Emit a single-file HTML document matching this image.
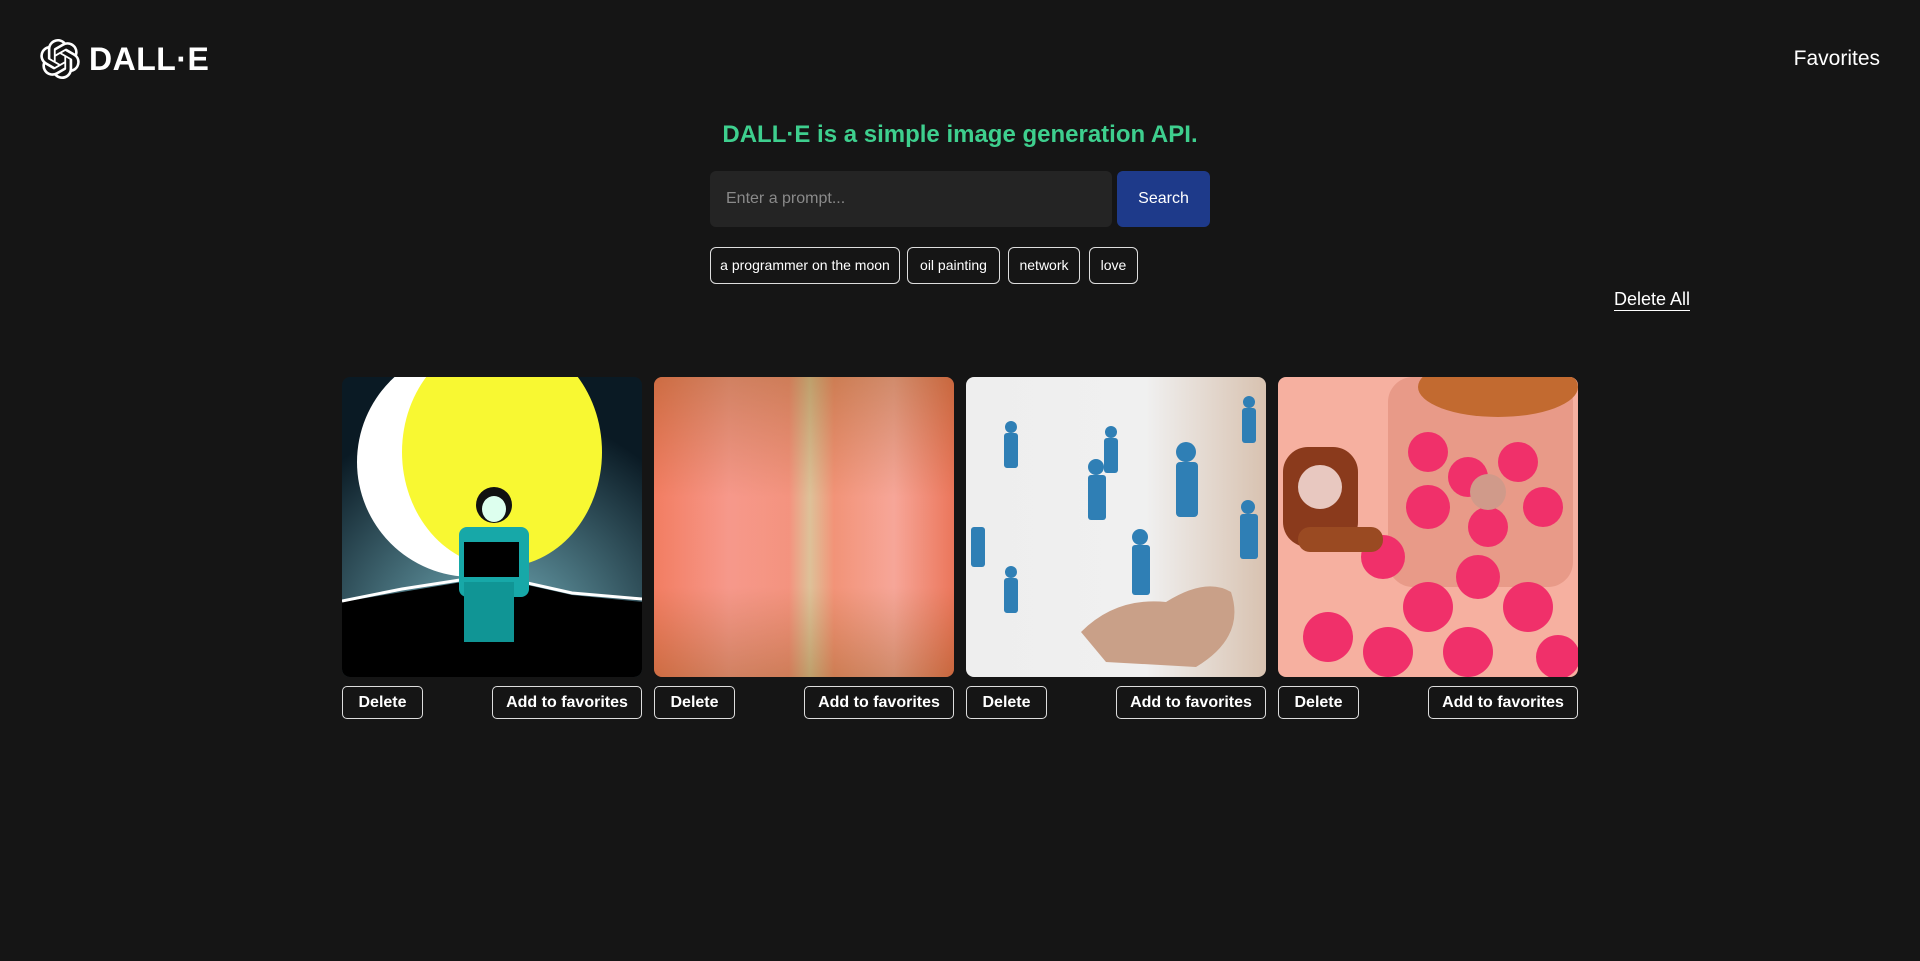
<!DOCTYPE html>
<html><head><meta charset="utf-8"><style>
*{box-sizing:border-box;margin:0;padding:0}
body{width:1920px;height:961px;background:#151515;font-family:"Liberation Sans",sans-serif;color:#fff;position:relative;overflow:hidden}
.logo{position:absolute;left:40px;top:39px;display:flex;align-items:center}
.logo span{font-size:32px;font-weight:bold;margin-left:9px;letter-spacing:0.5px}
.fav{position:absolute;right:40px;top:47px;font-size:21px}
h1{position:absolute;left:0;width:1920px;top:121px;text-align:center;font-size:24px;color:#3ecf8e;font-weight:bold}
.inp{position:absolute;left:710px;top:171px;width:402px;height:56px;background:#242424;border-radius:6px;color:#8a8a8a;font-size:16px;padding:19px 16px}
.btn{position:absolute;left:1117px;top:171px;width:93px;height:56px;background:#1e3a8a;border-radius:6px;font-size:16px;text-align:center;line-height:56px}
.chip{position:absolute;top:247px;height:37px;border:1px solid #ddd;border-radius:6px;font-size:14px;text-align:center;line-height:35px}
.da{position:absolute;left:1614px;top:288px;font-size:18px;border-bottom:1px solid #fff;line-height:22px}
.card{position:absolute;top:377px;width:300px}
.img{width:300px;height:300px;border-radius:8px;overflow:hidden}
.b{position:absolute;top:309px;height:33px;border:1px solid #ddd;border-radius:5px;font-size:16px;font-weight:bold;text-align:center;line-height:31px}
</style></head><body>
<div class="logo"><svg width="40" height="40" viewBox="0 0 24 24" fill="#fff"><path d="M22.2819 9.8211a5.9847 5.9847 0 0 0-.5157-4.9108 6.0462 6.0462 0 0 0-6.5098-2.9A6.0651 6.0651 0 0 0 4.9807 4.1818a5.9847 5.9847 0 0 0-3.9977 2.9 6.0462 6.0462 0 0 0 .7427 7.0966 5.98 5.98 0 0 0 .511 4.9107 6.051 6.051 0 0 0 6.5146 2.9001A5.9847 5.9847 0 0 0 13.2599 24a6.0557 6.0557 0 0 0 5.7718-4.2058 5.9894 5.9894 0 0 0 3.9977-2.9001 6.0557 6.0557 0 0 0-.7475-7.0729zm-9.022 12.6081a4.4755 4.4755 0 0 1-2.8764-1.0408l.1419-.0804 4.7783-2.7582a.7948.7948 0 0 0 .3927-.6813v-6.7369l2.02 1.1686a.071.071 0 0 1 .038.052v5.5826a4.504 4.504 0 0 1-4.4945 4.4944zm-9.6607-4.1254a4.4708 4.4708 0 0 1-.5346-3.0137l.142.0852 4.783 2.7582a.7712.7712 0 0 0 .7806 0l5.8428-3.3685v2.3324a.0804.0804 0 0 1-.0332.0615L9.74 19.9502a4.4992 4.4992 0 0 1-6.1408-1.6464zM2.3408 7.8956a4.485 4.485 0 0 1 2.3655-1.9728V11.6a.7664.7664 0 0 0 .3879.6765l5.8144 3.3543-2.0201 1.1685a.0757.0757 0 0 1-.071 0l-4.8303-2.7865A4.504 4.504 0 0 1 2.3408 7.872zm16.5963 3.8558L13.1038 8.364 15.1192 7.2a.0757.0757 0 0 1 .071 0l4.8303 2.7913a4.4944 4.4944 0 0 1-.6765 8.1042v-5.6772a.79.79 0 0 0-.407-.667zm2.0107-3.0231l-.142-.0852-4.7735-2.7818a.7759.7759 0 0 0-.7854 0L9.409 9.2297V6.8974a.0662.0662 0 0 1 .0284-.0615l4.8303-2.7866a4.4992 4.4992 0 0 1 6.6802 4.66zM8.3065 12.863l-2.02-1.1638a.0804.0804 0 0 1-.038-.0567V6.0742a4.4992 4.4992 0 0 1 7.3757-3.4537l-.142.0805L8.704 5.459a.7948.7948 0 0 0-.3927.6813zm1.0976-2.3654l2.602-1.4998 2.6069 1.4998v2.9994l-2.5974 1.4997-2.6067-1.4997Z"/></svg><span>DALL·E</span></div>
<div class="fav">Favorites</div>
<h1>DALL·E is a simple image generation API.</h1>
<div class="inp">Enter a prompt...</div>
<div class="btn">Search</div>
<div class="chip" style="left:710px;width:190px">a programmer on the moon</div>
<div class="chip" style="left:907px;width:93px">oil painting</div>
<div class="chip" style="left:1008px;width:72px">network</div>
<div class="chip" style="left:1089px;width:49px">love</div>
<div class="da">Delete All</div>

<div class="card" style="left:342px"><div class="img"><svg width="300" height="300"><defs><radialGradient id="g1" cx="0.5" cy="0.9" r="0.8"><stop offset="0" stop-color="#7ab8c4"/><stop offset="1" stop-color="#0a1a24"/></radialGradient></defs><rect width="300" height="300" fill="url(#g1)"/><circle cx="130" cy="85" r="115" fill="#fff"/><ellipse cx="160" cy="75" rx="100" ry="115" fill="#f8f832"/><path d="M0 225 L60 215 L150 200 L230 218 L300 225 L300 300 L0 300Z" fill="#000"/><path d="M0 224 L60 212 L150 198 L230 216 L300 222" stroke="#fff" stroke-width="3" fill="none"/><circle cx="152" cy="128" r="18" fill="#111"/><rect x="117" y="150" width="70" height="70" rx="8" fill="#17a8a8"/><rect x="122" y="165" width="55" height="35" fill="#000"/><rect x="122" y="205" width="50" height="60" fill="#109595"/><ellipse cx="152" cy="132" rx="12" ry="13" fill="#dfe"/></svg></div>
<div class="b" style="left:0;width:81px">Delete</div><div class="b" style="left:150px;width:150px">Add to favorites</div></div>

<div class="card" style="left:654px"><div class="img" style="background:linear-gradient(90deg,#f07050 0%,#f59080 25%,#f28a72 45%,#d8c090 52%,#f08a6a 60%,#f5a090 80%,#e86848 100%)"><div style="width:100%;height:100%;background:linear-gradient(180deg,rgba(140,100,40,.35),rgba(255,200,200,.15) 40%,rgba(255,200,200,.15) 70%,rgba(140,100,40,.35))"></div></div>
<div class="b" style="left:0;width:81px">Delete</div><div class="b" style="left:150px;width:150px">Add to favorites</div></div>

<div class="card" style="left:966px"><div class="img"><svg width="300" height="300"><defs><linearGradient id="g3" x1="0" x2="1"><stop offset="0" stop-color="#eeeeee"/><stop offset=".6" stop-color="#f0f0f0"/><stop offset="1" stop-color="#d8c2b0"/></linearGradient></defs><rect width="300" height="300" fill="url(#g3)"/><path d="M115 255 Q150 220 200 225 Q240 200 265 215 Q280 260 230 290 L140 285Z" fill="#c9a088"/><g fill="#2f7fb5"><circle cx="220" cy="75" r="10"/><rect x="210" y="85" width="22" height="55" rx="4"/><circle cx="130" cy="90" r="8"/><rect x="122" y="98" width="18" height="45" rx="3"/><circle cx="174" cy="160" r="8"/><rect x="166" y="168" width="18" height="50" rx="3"/><circle cx="45" cy="50" r="6"/><rect x="38" y="56" width="14" height="35" rx="3"/><circle cx="145" cy="55" r="6"/><rect x="138" y="61" width="14" height="35" rx="3"/><circle cx="45" cy="195" r="6"/><rect x="38" y="201" width="14" height="35" rx="3"/><circle cx="282" cy="130" r="7"/><rect x="274" y="137" width="18" height="45" rx="3"/><circle cx="283" cy="25" r="6"/><rect x="276" y="31" width="14" height="35" rx="3"/><rect x="5" y="150" width="14" height="40" rx="3"/></g></svg></div>
<div class="b" style="left:0;width:81px">Delete</div><div class="b" style="left:150px;width:150px">Add to favorites</div></div>

<div class="card" style="left:1278px"><div class="img"><svg width="300" height="300"><rect width="300" height="300" fill="#f6b0a0"/><rect x="110" y="0" width="185" height="210" rx="25" fill="#e89a88"/><ellipse cx="220" cy="10" rx="80" ry="30" fill="#c26a30"/><g fill="#f0306a"><circle cx="150" cy="75" r="20"/><circle cx="190" cy="100" r="20"/><circle cx="240" cy="85" r="20"/><circle cx="150" cy="130" r="22"/><circle cx="210" cy="150" r="20"/><circle cx="265" cy="130" r="20"/><circle cx="105" cy="180" r="22"/><circle cx="150" cy="230" r="25"/><circle cx="200" cy="200" r="22"/><circle cx="250" cy="230" r="25"/><circle cx="50" cy="260" r="25"/><circle cx="110" cy="275" r="25"/><circle cx="190" cy="275" r="25"/><circle cx="280" cy="280" r="22"/></g><circle cx="210" cy="115" r="18" fill="#d09a8a"/><rect x="5" y="70" width="75" height="100" rx="25" fill="#8a3a1c"/><circle cx="42" cy="110" r="22" fill="#e8c8c0"/><rect x="20" y="150" width="85" height="25" rx="12" fill="#9a4a22"/></svg></div>
<div class="b" style="left:0;width:81px">Delete</div><div class="b" style="left:150px;width:150px">Add to favorites</div></div>
</body></html>
